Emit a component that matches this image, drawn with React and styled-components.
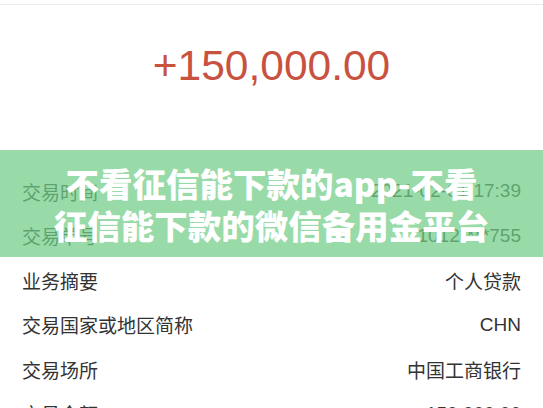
import React from "react";
import styled, { createGlobalStyle } from "styled-components";

const GlobalStyle = createGlobalStyle`
  html, body {
    margin: 0;
    padding: 0;
    background: #ffffff;
    overflow: hidden;
  }
  body {
    font-family: "Liberation Sans", "Noto Sans CJK SC", sans-serif;
    color: #333333;
  }
`;

const Page = styled.div`
  position: relative;
  width: 543px;
  height: 408px;
  overflow: hidden;
  background: #ffffff;
`;

const TopRule = styled.div`
  height: 4px;
  border-bottom: 1px solid #ececec;
`;

const Hero = styled.section`
  height: 164px;
  padding-top: 40px;
  box-sizing: border-box;
  display: flex;
  justify-content: center;
`;

const Amount = styled.div`
  font-family: "Liberation Sans", sans-serif;
  font-size: 42.5px;
  line-height: 42.5px;
  color: #c9513f;
`;

const List = styled.div`
  display: flex;
  flex-direction: column;
`;

const Row = styled.div`
  height: 44.5px;
  padding: 0 22px;
  display: flex;
  align-items: center;
  justify-content: space-between;
  font-size: 19px;
  color: #333333;
`;

const Label = styled.span`
  font-family: "Noto Sans CJK SC", sans-serif;
`;

const Value = styled.span`
  font-family: "Liberation Sans", "Noto Sans CJK SC", sans-serif;
`;

const Banner = styled.div`
  position: absolute;
  left: 0;
  right: 0;
  top: 150px;
  height: 107px;
  background: rgba(112, 205, 134, 0.72);
  display: flex;
  flex-direction: column;
  align-items: center;
  justify-content: center;
`;

const BannerLine = styled.div`
  font-family: "Noto Sans CJK SC", sans-serif;
  font-weight: 900;
  font-size: 33.5px;
  line-height: 42px;
  color: #ffffff;
  white-space: nowrap;
`;

const rows = [
  ["交易时间", "2021-02-01 17:39"],
  ["交易单号", "1012****755"],
  ["业务摘要", "个人贷款"],
  ["交易国家或地区简称", "CHN"],
  ["交易场所", "中国工商银行"],
  ["交易金额", "150,000.00"],
];

export default function App() {
  return (
    <>
      <GlobalStyle />
      <Page>
        <TopRule />
        <Hero>
          <Amount>+150,000.00</Amount>
        </Hero>
        <List>
          {rows.map(([k, v]) => (
            <Row key={k}>
              <Label>{k}</Label>
              <Value>{v}</Value>
            </Row>
          ))}
        </List>
        <Banner>
          <BannerLine>不看征信能下款的app-不看</BannerLine>
          <BannerLine>征信能下款的微信备用金平台</BannerLine>
        </Banner>
      </Page>
    </>
  );
}
